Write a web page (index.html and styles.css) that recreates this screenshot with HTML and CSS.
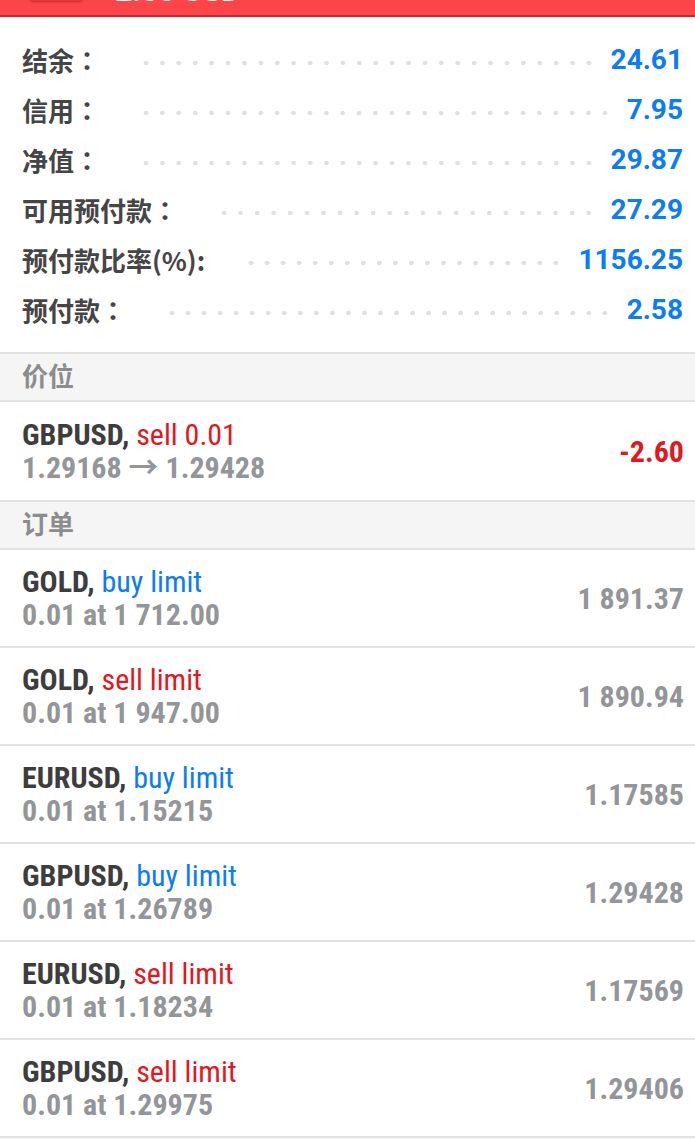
FILE: index.html
```html
<!DOCTYPE html>
<html lang="zh">
<head>
    <meta charset="UTF-8">
    <meta name="viewport" content="width=device-width, initial-scale=1.0">
    <title>交易</title>
    <link rel="stylesheet" href="styles.css">
</head>
<body>
    <div class="topbar">
        <span class="topbar-btn"></span>
        <span class="topbar-title">2.58 USD</span>
    </div>

    <!-- account summary -->
    <div class="summary">
        <div class="sum-row"><span class="sum-label">结余<span class="colon">：</span></span><span class="leader"></span><span class="sum-value">24.61</span></div>
        <div class="sum-row"><span class="sum-label">信用<span class="colon">：</span></span><span class="leader"></span><span class="sum-value">7.95</span></div>
        <div class="sum-row"><span class="sum-label">净值<span class="colon">：</span></span><span class="leader"></span><span class="sum-value">29.87</span></div>
        <div class="sum-row"><span class="sum-label">可用预付款<span class="colon">：</span></span><span class="leader"></span><span class="sum-value">27.29</span></div>
        <div class="sum-row"><span class="sum-label">预付款比率(%):</span><span class="leader"></span><span class="sum-value">1156.25</span></div>
        <div class="sum-row"><span class="sum-label">预付款<span class="colon">：</span></span><span class="leader"></span><span class="sum-value">2.58</span></div>
    </div>

    <div class="section-head">价位</div>
    <div class="trade position">
        <div class="trade-info">
            <div class="trade-title">GBPUSD, <span class="sell">sell 0.01</span></div>
            <div class="trade-sub">1.29168 → 1.29428</div>
        </div>
        <div class="trade-value loss">-2.60</div>
    </div>

    <div class="section-head">订单</div>
    <div class="trade">
        <div class="trade-info">
            <div class="trade-title">GOLD, <span class="buy">buy limit</span></div>
            <div class="trade-sub">0.01 at 1 712.00</div>
        </div>
        <div class="trade-value">1 891.37</div>
    </div>
    <div class="trade">
        <div class="trade-info">
            <div class="trade-title">GOLD, <span class="sell">sell limit</span></div>
            <div class="trade-sub">0.01 at 1 947.00</div>
        </div>
        <div class="trade-value">1 890.94</div>
    </div>
    <div class="trade">
        <div class="trade-info">
            <div class="trade-title">EURUSD, <span class="buy">buy limit</span></div>
            <div class="trade-sub">0.01 at 1.15215</div>
        </div>
        <div class="trade-value">1.17585</div>
    </div>
    <div class="trade">
        <div class="trade-info">
            <div class="trade-title">GBPUSD, <span class="buy">buy limit</span></div>
            <div class="trade-sub">0.01 at 1.26789</div>
        </div>
        <div class="trade-value">1.29428</div>
    </div>
    <div class="trade">
        <div class="trade-info">
            <div class="trade-title">EURUSD, <span class="sell">sell limit</span></div>
            <div class="trade-sub">0.01 at 1.18234</div>
        </div>
        <div class="trade-value">1.17569</div>
    </div>
    <div class="trade">
        <div class="trade-info">
            <div class="trade-title">GBPUSD, <span class="sell">sell limit</span></div>
            <div class="trade-sub">0.01 at 1.29975</div>
        </div>
        <div class="trade-value">1.29406</div>
    </div>
    <div class="section-head tail"></div>
</body>
</html>
```

FILE: styles.css
```css
body {
    margin: 0;
    background-color: #ffffff;
    font-family: Roboto, "Noto Sans CJK SC", sans-serif;
    color: #444444;
    overflow: hidden;
}
.topbar {
    position: relative;
    height: 15px;
    background-color: #fb4549;
    border-bottom: 2px solid #d92026;
    overflow: hidden;
}
.topbar-btn {
    position: absolute;
    left: 30px;
    top: -10px;
    width: 53px;
    height: 11px;
    border-radius: 3px;
    background-color: #e23a3e;
    box-shadow: 0 1px 2px rgba(120, 0, 0, 0.4);
}
.topbar-title {
    position: absolute;
    left: 115px;
    top: -25px;
    font-size: 30px;
    font-weight: bold;
    line-height: 32px;
    color: #ffffff;
}
.summary {
    padding: 17px 12px 18px 22px;
}
.sum-row {
    display: flex;
    align-items: center;
    height: 50px;
}
.sum-label {
    font-family: "Noto Sans CJK SC", sans-serif;
    font-size: 26px;
    font-weight: bold;
    color: #454545;
    white-space: nowrap;
    text-spacing-trim: space-all;
}
.colon {
    display: inline-block;
    width: 26px;
    text-align: center;
    font-family: "Noto Sans CJK JP", sans-serif;
}
.leader {
    flex: 1;
    height: 8px;
    margin: 8px 14px 0 38px;
    background-image: radial-gradient(circle, #e0e0e0 2px, transparent 2.5px);
    background-size: 16px 8px;
    background-position: left center;
    background-repeat: space no-repeat;
}
.sum-value {
    font-size: 28px;
    font-weight: bold;
    color: #0a7cf5;
}
.section-head {
    height: 46px;
    line-height: 46px;
    padding-left: 22px;
    background-color: #f5f5f5;
    border-top: 2px solid #e2e2e2;
    border-bottom: 2px solid #e2e2e2;
    font-size: 26px;
    font-weight: bold;
    color: #8c8c8c;
}
.section-head.tail {
    border-bottom: none;
}
.trade {
    display: flex;
    align-items: center;
    justify-content: space-between;
    height: 96px;
    padding: 0 11px 0 22px;
}
.trade.position {
    height: 98px;
}
.trade + .trade {
    border-top: 2px solid #e2e2e2;
}
.trade-title,
.trade-sub,
.trade-value {
    font-stretch: condensed;
    font-size: 30px;
    line-height: 33px;
}
.trade-title {
    font-weight: bold;
    color: #3d3d3d;
}
.trade-title span {
    font-weight: normal;
}
.trade-sub {
    font-weight: bold;
    color: #939598;
}
.trade-value {
    font-weight: bold;
    color: #939598;
}
.trade-value.loss {
    color: #e3171d;
}
.sell {
    color: #e3171d;
}
.buy {
    color: #0a7cf5;
}
```
